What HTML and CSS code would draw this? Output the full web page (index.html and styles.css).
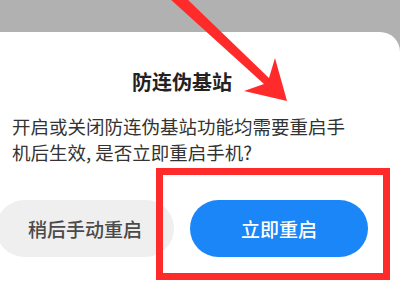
FILE: index.html
```html
<!DOCTYPE html>
<html lang="zh-CN">
<head>
<meta charset="utf-8">
<link rel="stylesheet" href="styles.css">
</head>
<body>
<div class="screen">
  <div class="card">
    <div class="title">防连伪基站</div>
    <p class="msg">开启或关闭防连伪基站功能均需要重启手机后生效, 是否立即重启手机?</p>
    <div class="actions">
      <div class="btn btn-later">稍后手动重启</div>
      <div class="btn btn-now">立即重启</div>
    </div>
  </div>
  <div class="highlight"></div>
  <svg class="arrow" width="400" height="300" viewBox="0 0 400 300">
    <polygon points="169,-2 186,-2 269,78 275,58 287,101 244,91 264,84" fill="#ff2b2b"/>
  </svg>
</div>
</body>
</html>
```
FILE: styles.css
```css
html, body {
  margin: 0;
  padding: 0;
}
body {
  width: 400px;
  height: 300px;
  overflow: hidden;
  background: #b1b1b1;
  font-family: "Noto Sans CJK SC", "Noto Sans", sans-serif;
}
.screen {
  position: relative;
  width: 400px;
  height: 300px;
  overflow: hidden;
}
.card {
  margin-top: 32px;
  margin-left: -36px;
  width: 436px;
  height: 300px;
  box-sizing: border-box;
  background: #ffffff;
  border-radius: 20px 20px 0 0;
  padding: 36px 32px 0 32px;
}
.title {
  text-align: center;
  font-size: 20px;
  line-height: 28px;
  font-weight: 700;
  color: #222222;
}
.msg {
  margin: 17px 0 0 16px;
  width: 345px;
  font-size: 18.5px;
  line-height: 26px;
  color: #333333;
}
.actions {
  display: flex;
  gap: 16px;
  margin-top: 35px;
}
.btn {
  flex: 1;
  height: 57px;
  border-radius: 29px;
  display: flex;
  align-items: center;
  justify-content: center;
  font-size: 19px;
  font-weight: 500;
}
.btn-later {
  background: #efefef;
  color: #4a4a4a;
}
.btn-now {
  background: #1a86f8;
  color: #ffffff;
}
.highlight {
  position: absolute;
  left: 156px;
  top: 168px;
  width: 234px;
  height: 112px;
  box-sizing: border-box;
  border: 7px solid #ff2b2b;
}
.arrow {
  position: absolute;
  left: 0;
  top: 0;
}
```
